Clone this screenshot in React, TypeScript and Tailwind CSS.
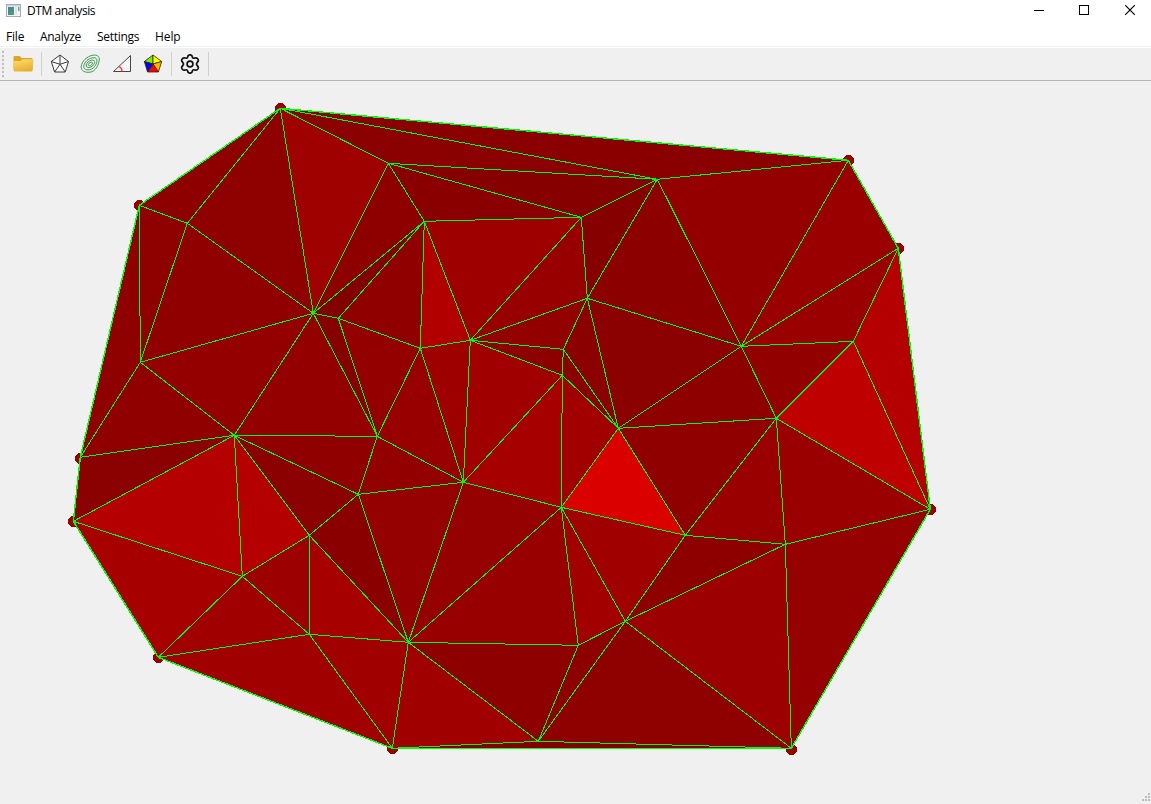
import React from "react";

type Point = [number, number];

const points: Record<string, Point> = {
  A: [280, 108], B: [848, 160], C: [898, 248], D: [930, 509], E: [791, 748],
  F: [392, 748], G: [158, 657], H: [73, 521], I: [80, 457], J: [139, 205],
  K: [187, 223], L: [313, 313], M: [388, 163], N: [424, 221], O: [581, 217],
  P: [657, 179], Q: [587, 298], R: [338, 318], S: [420, 348], T: [470, 340],
  U: [563, 349], V: [562, 375], W: [618, 428], X: [741, 346], Y: [853, 341],
  Z: [776, 418], a: [140, 362], b: [234, 435], c: [377, 436], d: [358, 494],
  e: [463, 482], f: [561, 507], g: [685, 535], h: [785, 544], i: [625, 621],
  j: [578, 645], k: [538, 741], l: [408, 642], m: [309, 634], n: [309, 535],
  o: [242, 576],
};

const triangles: [string, string][] = [
  ["ABP", "#8a0000"], ["AMP", "#8b0000"], ["MPO", "#860000"], ["MNO", "#8a0000"],
  ["OPQ", "#870000"], ["PQX", "#8d0000"], ["PXB", "#940000"], ["BXC", "#9b0000"],
  ["CXY", "#9b0000"], ["CYD", "#b40000"], ["YZD", "#be0000"], ["XYZ", "#930000"],
  ["XZW", "#8e0000"], ["QXW", "#8b0000"], ["QUW", "#8b0000"], ["UVW", "#8b0000"],
  ["TUV", "#8e0000"], ["TQU", "#930000"], ["TOQ", "#980000"], ["NOT", "#9e0000"],
  ["NTS", "#b20000"], ["NSR", "#900000"], ["NRL", "#820000"], ["MNL", "#8e0000"],
  ["AML", "#9f0000"], ["AKL", "#8f0000"], ["AKJ", "#8e0000"], ["JKa", "#8f0000"],
  ["KLa", "#900000"], ["JaI", "#8f0000"], ["aIb", "#910000"], ["aLb", "#940000"],
  ["IbH", "#8b0000"], ["Hbo", "#b40000"], ["bno", "#b40000"], ["bnd", "#8b0000"],
  ["bdc", "#910000"], ["bLc", "#940000"], ["LRc", "#870000"], ["RSc", "#940000"],
  ["Sce", "#980000"], ["STe", "#9e0000"], ["TVe", "#a00000"], ["Vef", "#a60000"],
  ["VfW", "#a20000"], ["fWg", "#da0000"], ["WgZ", "#900000"], ["gZh", "#9b0000"],
  ["ZhD", "#9b0000"], ["hDE", "#950000"], ["hiE", "#9c0000"], ["ghi", "#8e0000"],
  ["fgi", "#a00000"], ["fij", "#a20000"], ["ijk", "#8e0000"], ["ikE", "#8f0000"],
  ["kFE", "#820000"], ["lkF", "#a00000"], ["ljk", "#8e0000"], ["flj", "#980000"],
  ["efl", "#950000"], ["del", "#950000"], ["cde", "#920000"], ["ndl", "#8a0000"],
  ["nlm", "#a60000"], ["nmo", "#9c0000"], ["omG", "#a00000"], ["HoG", "#a60000"],
  ["mGF", "#a00000"], ["mlF", "#a00000"],
];

const hull = "ABCDEFGHIJ";
const hullDots: Point[] = [
  [280.5, 108.5], [848.5, 160.5], [898.5, 248.5], [930.5, 509.5], [791.5, 749.5],
  [392.5, 748.5], [158.5, 657.5], [73.5, 521.5], [80.5, 458.5], [139.5, 205.5],
];

// Each shared edge is kept once, so that neighbouring triangles do not stroke it twice.
const edges = Array.from(
  new Set(
    triangles.flatMap(([t]) =>
      [t[0] + t[1], t[1] + t[2], t[0] + t[2]].map((pair) => pair.split("").sort().join(""))
    )
  )
);

const at = (n: string): Point => [points[n][0] + 0.3, points[n][1] + 0.3];
const outline = (names: string) => names.split("").map((n) => at(n).join(",")).join(" ");

function Mesh() {
  return (
    <svg className="block" width="1151" height="723" viewBox="0 81 1151 723" shapeRendering="crispEdges">
      {hullDots.map(([x, y]) => (
        <circle key={`${x}`} cx={x} cy={y} r="5.5" fill="#9b0000" />
      ))}
      {triangles.map(([t, fill]) => (
        <polygon key={t} points={outline(t)} fill={fill} />
      ))}
      {edges.map((pair) => {
        const [x1, y1] = at(pair[0]);
        const [x2, y2] = at(pair[1]);
        return <line key={pair} x1={x1} y1={y1} x2={x2} y2={y2} stroke="#00ff00" strokeWidth="1" />;
      })}
      <polygon points={outline(hull)} fill="none" stroke="#00ff00" strokeWidth="1.4" />
    </svg>
  );
}

function AppIcon() {
  return (
    <svg width="15" height="13" viewBox="0 0 15 13">
      <defs>
        <linearGradient id="pane" x1="0" y1="0" x2="1" y2="1">
          <stop offset="0" stopColor="#4b7fa0" />
          <stop offset="1" stopColor="#4da070" />
        </linearGradient>
      </defs>
      <rect x="0.5" y="0.5" width="14" height="12" fill="#f2f4f5" stroke="#a3adb3" />
      <rect x="1" y="1" width="13" height="1.5" fill="#c8d3d9" />
      <rect x="2" y="3" width="6" height="8" fill="url(#pane)" />
      <rect x="9" y="3" width="2" height="8" fill="#dce5e8" />
      <rect x="12" y="3" width="1.5" height="4" fill="#6fa69b" />
    </svg>
  );
}

function FolderIcon() {
  return (
    <svg width="21" height="18" viewBox="0 0 21 18">
      <defs>
        <linearGradient id="folder" x1="0" y1="0" x2=".4" y2="1">
          <stop offset="0" stopColor="#ffdf72" />
          <stop offset="1" stopColor="#e9b033" />
        </linearGradient>
      </defs>
      <path d="M.5 2Q.5 1 1.5 1H6.6L8.6 3H18.5Q19.5 3 19.5 4V14H.5Z" fill="#e0a526" />
      <path d="M1 6H7.5L9.5 4.3H19.5Q20.6 4.3 20.4 5.3L19.6 15.5Q19.5 16.5 18.5 16.5H1.6Q.7 16.5 .6 15.5L.2 7Q.2 6 1 6Z" fill="url(#folder)" />
    </svg>
  );
}

function TinIcon() {
  return (
    <svg width="20" height="20" viewBox="0 0 20 20" fill="none" stroke="#3c3c3c" strokeWidth="1">
      <path d="M10 1L18.5 7.5L15.3 18H4.6L1.3 7.5Z" fill="#fafafa" />
      <path d="M10 10.3V1M10 10.3L18.5 7.5M10 10.3L15.3 18M10 10.3L4.6 18M10 10.3L1.3 7.5" />
    </svg>
  );
}

function ContourIcon() {
  return (
    <svg width="21" height="20" viewBox="0 0 21 20" fill="none" stroke="#3f9b4c" strokeWidth="1">
      <path d="M13 1.2C17 .6 19.8 2.4 19.3 6C18.8 10 16 17.6 10 18.2C5 18.8 .8 17 1.2 12.6C1.6 7.5 7 2 13 1.2Z" />
      <path d="M12.5 3.8C15.8 3.2 17.4 4.8 16.9 7.4C16.3 11 13.4 15.4 9.2 15.8C5.6 16.2 3.4 14.8 3.8 11.9C4.3 8.3 8 4.6 12.5 3.8Z" />
      <path d="M11.8 6.1C14 5.7 15 6.9 14.6 8.6C14 11 11.8 13.3 9.1 13.5C7 13.7 5.8 12.6 6.2 11C6.7 8.7 9 6.6 11.8 6.1Z" />
      <path d="M11 8.3C12.3 8 12.8 8.7 12.5 9.6C12.1 10.8 10.8 11.6 9.6 11.6C8.5 11.6 8.1 11 8.5 10.1C8.9 9.1 9.9 8.5 11 8.3Z" />
    </svg>
  );
}

function SlopeIcon() {
  return (
    <svg width="20" height="20" viewBox="0 0 20 20" fill="none">
      <path d="M1.5 17.5L18.5 1.5V17.5Z" fill="#f6f6f6" stroke="#444" strokeWidth="1" />
      <path d="M7.2 12.4Q10 14 10.2 17.5" stroke="#ff2020" strokeWidth="1.2" />
    </svg>
  );
}

function AspectIcon() {
  return (
    <svg width="20" height="20" viewBox="0 0 20 20" stroke="#302800" strokeWidth=".8" strokeLinejoin="round">
      <path d="M10 10L10 1L1.3 7.5Z" fill="#80ee00" />
      <path d="M10 10L10 1L18.7 7.5Z" fill="#ffff00" />
      <path d="M10 10L18.7 7.5L15.4 18Z" fill="#ffb400" />
      <path d="M10 10L15.4 18H4.6Z" fill="#ff0000" />
      <path d="M10 10L4.6 18L1.3 7.5Z" fill="#0000ff" />
    </svg>
  );
}

function GearIcon() {
  return (
    <svg width="22" height="22" viewBox="0 0 24 24" fill="none" stroke="#111" strokeWidth="1.8" strokeLinejoin="round">
      <path d="M9.5 4.2Q9.8 2 12 2Q14.2 2 14.5 4.2Q14.9 6.3 17.1 5.5Q19.5 4.6 20.7 6.6Q21.8 8.6 20 10.1Q18.2 12 20 13.9Q21.8 15.4 20.7 17.4Q19.5 19.4 17.1 18.5Q14.9 17.7 14.5 19.8Q14.2 22 12 22Q9.8 22 9.5 19.8Q9.1 17.7 6.9 18.5Q4.5 19.4 3.3 17.4Q2.2 15.4 4 13.9Q5.8 12 4 10.1Q2.2 8.6 3.3 6.6Q4.5 4.6 6.9 5.5Q9.1 6.3 9.5 4.2Z" />
      <circle cx="12" cy="12" r="3.2" />
    </svg>
  );
}

const Separator = () => <div className="h-6 w-px shrink-0 bg-[#d0d0d0]" />;

function ToolButton({ children }: { children: React.ReactNode }) {
  return <button className="flex h-[31px] w-[31px] shrink-0 items-center justify-center">{children}</button>;
}

export default function App() {
  return (
    <div className="flex h-[804px] w-[1151px] flex-col overflow-hidden bg-[#f0f0f0] font-['Open_Sans','Noto_Sans',sans-serif] text-[12px] text-black">
      <header className="flex h-[22px] shrink-0 items-center bg-white pl-[6px]">
        <div className="-mt-0.5"><AppIcon /></div>
        <span className="ml-[6px] w-[72px] whitespace-nowrap leading-[22px] tracking-[-0.45px]">DTM analysis</span>
        <div className="ml-auto flex h-full">
          <button className="flex w-[45px] justify-center">
            <svg width="10" height="20" viewBox="0 0 10 20" shapeRendering="crispEdges"><path d="M0 10.5H10" stroke="black" /></svg>
          </button>
          <button className="flex w-[46px] justify-center">
            <svg width="10" height="20" viewBox="0 0 10 20" shapeRendering="crispEdges"><path d="M.5 5.5H9.5V14.5H.5Z" fill="none" stroke="black" /></svg>
          </button>
          <button className="flex w-[44px] justify-center">
            <svg className="ml-0.5" width="10" height="20" viewBox="0 0 10 20"><path d="M.2 5.2L9.8 14.8M9.8 5.2L.2 14.8" stroke="black" strokeWidth="1.1" /></svg>
          </button>
        </div>
      </header>
      <nav className="flex h-[24px] shrink-0 bg-white pl-[6px] leading-[30px]">
        <span className="w-[34px] tracking-[-0.2px]">File</span>
        <span className="w-[57px] tracking-[-0.3px]">Analyze</span>
        <span className="w-[58px] tracking-[-0.3px]">Settings</span>
        <span className="tracking-[-0.1px]">Help</span>
      </nav>
      <div className="h-[2px] shrink-0 border-b border-white bg-[#efefef]" />
      <div className="flex h-[33px] shrink-0 items-center border-b border-[#b5b5b5]">
        <svg className="shrink-0" width="7" height="32" viewBox="0 0 7 32" shapeRendering="crispEdges">
          {[3, 7, 11, 15, 19, 23, 27].map((y) => (
            <rect key={y} x="2" y={y} width="2" height="2" fill="#bdbdbd" />
          ))}
        </svg>
        <div className="w-px" />
        <ToolButton><FolderIcon /></ToolButton>
        <div className="w-[2px]" />
        <Separator />
        <div className="w-[2px]" />
        <ToolButton><TinIcon /></ToolButton>
        <ToolButton><ContourIcon /></ToolButton>
        <ToolButton><SlopeIcon /></ToolButton>
        <ToolButton><AspectIcon /></ToolButton>
        <div className="w-[3px]" />
        <Separator />
        <div className="w-[2px]" />
        <ToolButton><GearIcon /></ToolButton>
        <div className="w-[3px]" />
        <Separator />
      </div>
      <main className="relative min-h-0 flex-1">
        <Mesh />
        <svg className="absolute bottom-0 right-0" width="12" height="12" viewBox="0 0 12 12" shapeRendering="crispEdges" fill="#bdbdbd">
          <path d="M9 1h2v2H9zM6 4h2v2H6zM9 4h2v2H9zM3 7h2v2H3zM6 7h2v2H6zM9 7h2v2H9z" />
        </svg>
      </main>
    </div>
  );
}
